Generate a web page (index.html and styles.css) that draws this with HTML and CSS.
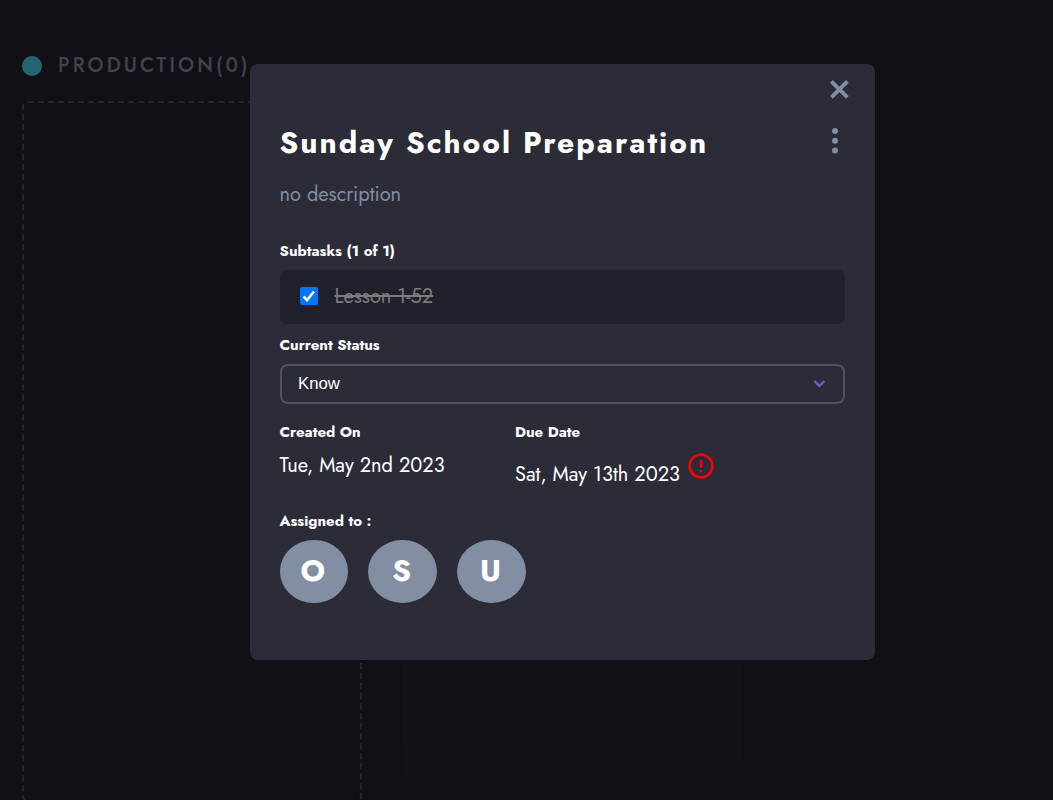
FILE: index.html
```html
<!DOCTYPE html>
<html lang="en">
<head>
<meta charset="utf-8">
<title>Board</title>
<link rel="stylesheet" href="styles.css">
</head>
<body>
<main class="board">
  <section class="column">
    <h2 class="column-title"><span class="dot"></span><span>PRODUCTION(0)</span></h2>
    <div class="empty-list"></div>
  </section>
  <section class="column cards">
    <div class="gradient-list"></div>
  </section>
</main>
<div class="overlay">
  <article class="modal">
    <button class="close" aria-label="Close"><svg width="20" height="20" viewBox="0 0 20 20"><path d="M2.4 2.4 18.4 18.4M18.4 2.4 2.4 18.4" stroke="currentColor" stroke-width="3.8"/></svg></button>
    <header class="heading">
      <h1 class="title">Sunday School Preparation</h1>
      <button class="more" aria-label="More"><svg width="6" height="26" viewBox="0 0 6 26" fill="currentColor"><circle cx="3" cy="3" r="3"/><circle cx="3" cy="12.7" r="3"/><circle cx="3" cy="22.4" r="3"/></svg></button>
    </header>
    <p class="description">no description</p>
    <h3 class="label subtasks-label">Subtasks (1 of 1)</h3>
    <label class="subtask">
      <span class="check"><svg width="18" height="18" viewBox="0 0 18 18"><path d="M3.5 9.5 7 13 14 4.5" fill="none" stroke="#fff" stroke-width="2.6"/></svg></span>
      <span class="subtask-name">Lesson 1-52</span>
    </label>
    <h3 class="label status-label">Current Status</h3>
    <div class="select"><span>Know</span><svg width="12" height="8" viewBox="0 0 12 8"><path d="M1.4 1.2 6.4 5.8 11.4 1.2" fill="none" stroke="#635fc7" stroke-width="2.5"/></svg></div>
    <div class="dates">
      <div class="date-block">
        <h3 class="label created-label">Created On</h3>
        <p class="date created">Tue, May 2nd 2023</p>
      </div>
      <div class="date-block">
        <h3 class="label due-label">Due Date</h3>
        <div class="due-row"><p class="date due">Sat, May 13th 2023</p>
        <svg class="alert" width="26" height="26" viewBox="0 0 26 26"><circle cx="13" cy="13" r="11.4" fill="none" stroke="#f00" stroke-width="2.4"/><path d="M13 7v7.5M13 16.8v2.5" stroke="#f00" stroke-width="2.6"/></svg></div>
      </div>
    </div>
    <h3 class="label assigned-label">Assigned to :</h3>
    <div class="people"><span class="avatar">O</span><span class="avatar">S</span><span class="avatar">U</span></div>
  </article>
</div>
</body>
</html>
```
FILE: styles.css
```css
* { box-sizing: border-box; }
body, h1, h2, h3, p { margin: 0; }
body {
  height: 800px;
  overflow: hidden;
  background: #111016;
  color: #fff;
  font-family: Jost, Lato, sans-serif;
}
button { padding: 0; border: 0; background: none; color: #828fa3; }
svg { display: block; overflow: visible; }
.board { display: flex; gap: 40px; height: 800px; padding: 53px 0 0 22px; }
.column { width: 340px; flex: none; }
.column-title {
  display: flex;
  align-items: center;
  gap: 16px;
  height: 25px;
  font-size: 20px;
  font-weight: 500;
  letter-spacing: 3.08px;
  color: #3f444f;
  white-space: nowrap;
}
.dot { width: 20px; height: 20px; border-radius: 50%; background: #256473; }
.empty-list { height: 701px; margin-top: 23px; border: 2px dashed #25272f; border-radius: 6px; }
.cards { padding-top: 48px; }
.gradient-list { height: 699px; background: linear-gradient(#15191d, #111217); }
.overlay { position: absolute; inset: 0; padding: 64px 0 0 250px; }
.modal {
  display: flex;
  flex-direction: column;
  width: 625px;
  height: 596px;
  padding: 15px 30px 0 29.5px;
  border-radius: 8px;
  background: #2c2c38;
}
.close { align-self: flex-end; height: 20px; margin-right: -4px; }
.heading { display: flex; justify-content: space-between; align-items: center; height: 44px; margin-top: 22px; }
.title { padding-bottom: 2px; font-size: 30px; font-weight: 700; letter-spacing: 2px; white-space: nowrap; }
.more { height: 26px; margin: -4px 7.5px 0 0; }
.description { height: 30px; margin-top: 15px; font-size: 20px; line-height: 30px; color: #828fa3; }
.label { height: 20px; font-size: 15px; line-height: 20px; font-weight: 700; white-space: nowrap; }
.subtasks-label { margin-top: 31px; }
.subtask {
  display: flex;
  align-items: center;
  gap: 16.5px;
  height: 54px;
  margin: 9px 0 0 .5px;
  padding: 0 0 1px 20px;
  border-radius: 7px;
  background: #21212d;
}
.check { width: 18px; height: 18px; margin-bottom: 1px; border-radius: 2px; background: #0075ff; }
.subtask-name { font-size: 20px; color: #7c7c7c; text-decoration: line-through; }
.status-label { margin-top: 11px; }
.select {
  display: flex;
  align-items: center;
  justify-content: space-between;
  height: 40px;
  margin: 9px 0 0 .5px;
  padding: 0 18px 0 16px;
  border: 2px solid #4e5361;
  border-radius: 8px;
  font: 16.7px "Liberation Sans", Arial, sans-serif;
}
.dates { display: flex; height: 86px; margin-top: 18px; }
.date-block { width: 235.5px; }
.date { font-size: 20px; line-height: 30px; white-space: nowrap; }
.created { margin-top: 9px; }
.due-row { display: flex; gap: 8px; margin-top: 11px; }
.due { width: 165px; padding-top: 7px; }
.alert { flex: none; }
.assigned-label { margin-top: 3px; }
.people { display: flex; gap: 20px; margin-top: 9px; }
.avatar {
  display: flex;
  align-items: center;
  justify-content: center;
  width: 68.8px;
  height: 63px;
  padding: 0 2px 2px 0;
  border-radius: 50%;
  background: #828fa3;
  font-size: 30px;
  font-weight: 700;
}
```
